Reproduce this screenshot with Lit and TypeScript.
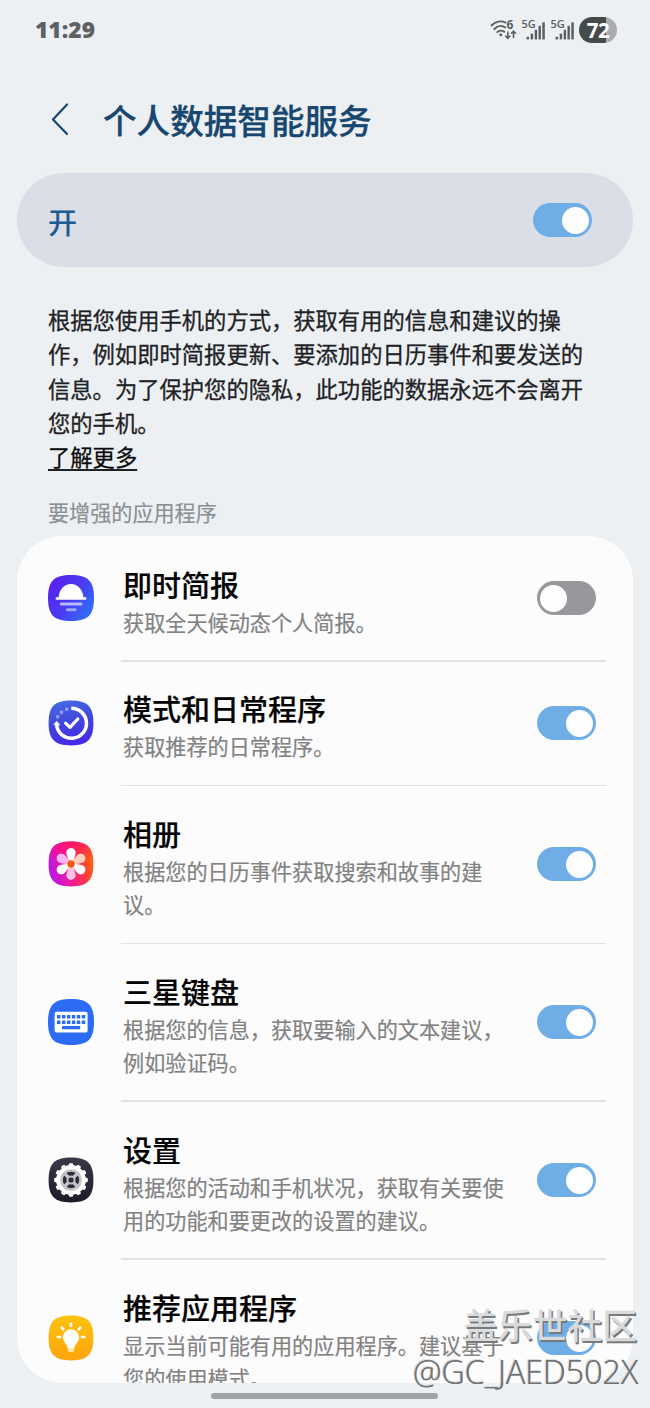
import { LitElement, html, css, svg, type TemplateResult } from "lit";
import { customElement, property } from "lit/decorators.js";
import { classMap } from "lit/directives/class-map.js";

const SQUIRCLE = "M24 1C41 1 47 7 47 24S41 47 24 47 1 41 1 24 7 1 24 1Z";
const SMALL_SQUIRCLE = "M24 1.6C40.4 1.6 46.4 7.6 46.4 24S40.4 46.4 24 46.4 1.6 40.4 1.6 24 7.6 1.6 24 1.6Z";

const briefIcon = html`<svg width="48" height="48" viewBox="0 0 48 48">
  <defs><linearGradient id="g" x1="0" y1="0.2" x2="1" y2="0.9">
    <stop offset="0" stop-color="#5a1fee" /><stop offset="0.5" stop-color="#4a3cf0" /><stop offset="1" stop-color="#2b78fb" />
  </linearGradient></defs>
  <path d=${SQUIRCLE} fill="url(#g)" />
  <path d="M11.6 23.3C12.2 15.8 17.2 10 24 10S35.8 15.8 36.4 23.3H38.2a1.1 1.1 0 0 1 0 2.5H9.8a1.1 1.1 0 0 1 0-2.5Z" fill="#fff" />
  <rect x="12.8" y="28.6" width="22.8" height="3" rx="1.5" fill="#b9b7fb" />
  <rect x="18.8" y="34.3" width="10.8" height="3" rx="1.5" fill="#9fa6fb" />
</svg>`;

const routineIcon = html`<svg width="48" height="48" viewBox="0 0 48 48">
  <defs><linearGradient id="g" x1="0.4" y1="0" x2="0.6" y2="1">
    <stop offset="0" stop-color="#4468e0" /><stop offset="0.5" stop-color="#4145df" /><stop offset="1" stop-color="#4527e6" />
  </linearGradient></defs>
  <path d=${SMALL_SQUIRCLE} fill="url(#g)" />
  <path d="M24.3 9.3A15 15 0 1 1 9.6 26" fill="none" stroke="#fff" stroke-width="3.5" />
  <path d="M7 25.6 9.7 22.4 12.6 26Z" fill="#fff" stroke="#fff" stroke-linejoin="round" />
  <path d="M18.6 24.2 23 28.3 30.8 20" fill="none" stroke="#fff" stroke-width="3.2" stroke-linecap="round" stroke-linejoin="round" />
  <g fill="#8d9cf0"><rect x="9" y="16" width="3.4" height="3.4" rx=".8" /><rect x="12.8" y="11.5" width="3.4" height="3.4" rx=".8" /><rect x="18" y="8.6" width="3.4" height="3.4" rx=".8" /></g>
</svg>`;

const petals = [0, 60, 120, 180, 240, 300];
const petalFill = ["#fff", "#ffd0c0", "#fff", "#ffc0e6", "#fff", "#f8b4f4"];
const galleryIcon = html`<svg width="48" height="48" viewBox="0 0 48 48">
  <defs>
    <linearGradient id="g" x1="0" y1="0.7" x2="1" y2="0.4">
      <stop offset="0" stop-color="#b516f2" /><stop offset="0.45" stop-color="#f51b8c" /><stop offset="0.75" stop-color="#fc3c3c" /><stop offset="1" stop-color="#fd6a0a" />
    </linearGradient>
    <linearGradient id="h" x1="0" y1="0" x2="0" y2="1">
      <stop offset="0" stop-color="#fb0a78" stop-opacity="0.75" /><stop offset="0.4" stop-color="#fb0a78" stop-opacity="0" />
    </linearGradient>
  </defs>
  <path d=${SMALL_SQUIRCLE} fill="url(#g)" />
  <path d=${SMALL_SQUIRCLE} fill="url(#h)" />
  ${petals.map((a, i) => svg`<path d="M22 21.5C21 17.5 19.3 15 19.3 12.8a4.7 4.7 0 0 1 9.4 0C28.7 15 27 17.5 26 21.5Z" fill=${petalFill[i]} transform="rotate(${a} 24 24)" />`)}
  <circle cx="24" cy="24" r="3.7" fill="#fb5a12" />
</svg>`;

const keyCols = [0, 1, 2, 3, 4, 5];
const keyboardIcon = html`<svg width="48" height="48" viewBox="0 0 48 48">
  <path d=${SQUIRCLE} fill="#2c6bf3" />
  <rect x="7.6" y="13.8" width="33" height="20.6" rx="2" fill="#fff" />
  <g fill="#2c6bf3">
    ${keyCols.map((c) => svg`<rect x=${10 + c * 4.95} y="16.9" width="3.5" height="3.7" rx=".4" /><rect x=${10 + c * 4.95} y="22.4" width="3.5" height="3.7" rx=".4" />`)}
    <rect x="15" y="28" width="18.2" height="3.2" rx=".4" />
  </g>
</svg>`;

const teeth = Array.from({ length: 12 }, (_, i) => i * 30);
const settingsIcon = html`<svg width="48" height="48" viewBox="0 0 48 48">
  <defs><linearGradient id="g" x1="0" y1="0" x2="0" y2="1"><stop offset="0" stop-color="#3b3949" /><stop offset="1" stop-color="#1c1b29" /></linearGradient></defs>
  <path d=${SMALL_SQUIRCLE} fill="url(#g)" />
  <circle cx="24" cy="24" r="14.9" fill="#fff" />
  ${teeth.map((a) => svg`<rect x="21.8" y="7.2" width="4.4" height="5" rx="1.2" fill="#fff" transform="rotate(${a} 24 24)" />`)}
  <circle cx="24" cy="24" r="10.8" fill="#c3c3ca" />
  <circle cx="24" cy="24" r="6.4" fill="none" stroke="#2d2c3a" stroke-width="3.6" />
  <path d="M17 17 31 31M31 17 17 31" stroke="#c3c3ca" stroke-width="3.2" />
  <circle cx="24" cy="24" r="2.6" fill="#2d2c3a" />
</svg>`;

const rays = [-90, -45, 0, 45, 90];
const tipsIcon = html`<svg width="48" height="48" viewBox="0 0 48 48">
  <defs><linearGradient id="g" x1="0" y1="0" x2="0" y2="1"><stop offset="0" stop-color="#fec20c" /><stop offset="1" stop-color="#fda40e" /></linearGradient></defs>
  <path d=${SMALL_SQUIRCLE} fill="url(#g)" />
  <path d="M24 15.3a8.2 8.2 0 0 1 8.2 8.2c0 4-3.5 5.3-4.9 10.5H20.7C19.3 28.8 15.8 27.5 15.8 23.5A8.2 8.2 0 0 1 24 15.3Z" fill="#fff" />
  <path d="M20.9 34H27.1V35.2a3.1 2.9 0 0 1-6.2 0Z" fill="#ffe7b0" />
  ${rays.map((a) => svg`<path d="M24 9.8V12" transform="rotate(${a} 24 23)" stroke="#fff" stroke-width="2.6" stroke-linecap="round" />`)}
</svg>`;

interface Item { icon: TemplateResult; title: string; text: string; on: boolean; }

const items: Item[] = [
  { icon: briefIcon, title: "即时简报", text: "获取全天候动态个人简报。", on: false },
  { icon: routineIcon, title: "模式和日常程序", text: "获取推荐的日常程序。", on: true },
  { icon: galleryIcon, title: "相册", text: "根据您的日历事件获取搜索和故事的建议。", on: true },
  { icon: keyboardIcon, title: "三星键盘", text: "根据您的信息，获取要输入的文本建议，例如验证码。", on: true },
  { icon: settingsIcon, title: "设置", text: "根据您的活动和手机状况，获取有关要使用的功能和要更改的设置的建议。", on: true },
  { icon: tipsIcon, title: "推荐应用程序", text: "显示当前可能有用的应用程序。建议基于您的使用模式。", on: true },
];

@customElement("ui-switch")
export class UiSwitch extends LitElement {
  @property({ type: Boolean }) on = false;
  static styles = css`
    :host { display: block; flex: none; }
    .track { box-sizing: border-box; display: flex; width: 59px; height: 34px; padding: 3.5px 3px; border-radius: 17px; background: #98979c; }
    .track.on { justify-content: flex-end; background: #6fade7; }
    .knob { width: 27px; height: 27px; border-radius: 50%; background: #fdfdfe; }
  `;
  render() {
    return html`<div class=${classMap({ track: true, on: this.on })}><div class="knob"></div></div>`;
  }
}

@customElement("service-row")
export class ServiceRow extends LitElement {
  @property({ attribute: false }) item!: Item;
  static styles = css`
    :host { display: block; }
    .row { display: flex; align-items: center; padding: 0 37px 0 30px; }
    .icon { width: 48px; height: 48px; flex: none; }
    .icon svg { display: block; }
    .copy { width: 390px; margin-left: 28px; padding: 26.7px 0 22.8px; flex: none; }
    .title { font-size: 29px; line-height: 42px; font-weight: 500; color: #050505; -webkit-text-stroke: 0.2px #050505; }
    .text { font-size: 21.15px; line-height: 33.2px; color: #828282; -webkit-text-stroke: 0.2px #828282; }
    ui-switch { margin-left: auto; }
  `;
  render() {
    const { icon, title, text, on } = this.item;
    return html`<div class="row">
      <div class="icon">${icon}</div>
      <div class="copy"><div class="title">${title}</div><div class="text">${text}</div></div>
      <ui-switch ?on=${on}></ui-switch>
    </div>`;
  }
}

const signal = html`<svg width="26" height="24" viewBox="0 0 26 24">
  <text x="0.5" y="10" class="net">5G</text>
  <g fill="#5b5f62"><rect x="5.5" y="18.8" width="2.6" height="2.6" /><rect x="9.7" y="15.6" width="2.4" height="5.8" /><rect x="13.7" y="11.8" width="2.4" height="9.6" /><rect x="17.5" y="7.8" width="2.4" height="13.6" /><rect x="21.3" y="4.3" width="2.5" height="17.1" /></g>
</svg>`;

@customElement("app-root")
export class AppRoot extends LitElement {
  static styles = css`
    :host {
      display: block; position: relative; width: 650px; height: 1408px; overflow: hidden; background: #ecf0f3;
      font-family: "Noto Sans CJK SC", sans-serif;
    }
    .page { display: flex; flex-direction: column; height: 1408px; }
    .status { display: flex; align-items: center; height: 60px; padding: 0 33px 0 35px; flex: none; }
    .time { font: 800 22.8px/30px "Open Sans", sans-serif; color: #5d6164; flex: 1; }
    .indicators { display: flex; align-items: center; }
    .indicators svg { display: block; overflow: visible; }
    .wifi { margin-right: 3px; }
    .sim { width: 29px; }
    .net { font: 600 11px "Open Sans", sans-serif; fill: #5b5f62; }
    .six { font: 700 12px "Open Sans", sans-serif; fill: #5b5f62; }
    .battery { width: 38px; height: 26px; border-radius: 13px; background: linear-gradient(90deg, #454a4b 72%, #a9adaf 72%); color: #fff; font: 700 20.5px/26px "Open Sans", sans-serif; letter-spacing: -0.5px; text-align: center; }
    .header { display: flex; align-items: center; height: 113px; padding: 0 50px; box-sizing: border-box; flex: none; }
    .back { width: 20px; height: 34px; margin: 5px 33px 0 0; }
    h1 { margin: 7px 0 0; font-size: 33.6px; line-height: 50px; font-weight: 500; color: #17466f; -webkit-text-stroke: 0.3px #17466f; }
    .master { display: flex; align-items: center; justify-content: space-between; box-sizing: border-box; height: 94px; margin: 0 17px; padding: 0 41px 0 31px; border-radius: 47px; background: #d9dee7; flex: none; }
    .state { margin-top: 2px; font-size: 29px; line-height: 42px; font-weight: 500; color: #1c5c93; }
    .intro { width: 545px; margin: 35px 0 0 48px; font-size: 22.3px; line-height: 34.3px; color: #1e2225; -webkit-text-stroke: 0.3px #1e2225; flex: none; }
    .more { color: #050505; text-decoration: underline; text-decoration-thickness: 2px; text-underline-offset: 3px; }
    .label { margin: 24px 0 0 48px; height: 38.6px; font-size: 21.1px; line-height: 30px; color: #8d9093; -webkit-text-stroke: 0.2px #8d9093; flex: none; }
    .card { height: 847px; margin: 0 17px; box-sizing: border-box; border-radius: 45px; background: #fcfcfd; overflow: hidden; flex: none; }
    .rule { height: 1.5px; margin: -0.75px 27px -0.75px 104px; background: #e1e2e3; }
    .home { width: 227px; height: 6px; margin: 10px 0 0 211px; border-radius: 3px; background: #a0a4a6; flex: none; }
    .mark { position: absolute; right: 12px; top: 1301px; text-align: right; color: #d9dadb; }
    .mark-name { margin-right: 1px; font-size: 34.8px; line-height: 46px; font-weight: 500; text-shadow: 1.5px 1.5px 0 #77797b; }
    .mark-user { margin-top: 2px; font: 300 32.2px/46px "Open Sans", sans-serif; color: #6f7274; text-shadow: -1px -1px 0 #dcddde, 0.5px 0 0 #7c7f81; }
  `;
  render() {
    return html`<div class="page">
      <div class="status">
        <div class="time">11:29</div>
        <div class="indicators">
          <svg class="wifi" width="28" height="24" viewBox="0 0 28 24">
            <g fill="none" stroke="#5b5f62" stroke-width="1.9" stroke-linecap="round">
              <path d="M1.5 7.5C5.5 3 11.5 2.5 15.5 4.6M4.3 11C7.5 7.6 12 7.2 15.2 9.5M7.2 14.2C9.2 12.2 12.2 12.2 14.2 13.8" />
              <path d="M17.8 14V20M15.8 18.2 17.8 20.3 19.8 18.2M23.5 19.5V13.5M21.5 15.2 23.5 13.2 25.5 15.2" stroke-width="1.6" />
            </g>
            <circle cx="10.8" cy="16.8" r="1.5" fill="#5b5f62" />
            <text class="six" x="16.5" y="10.8">6</text>
          </svg>
          <div class="sim">${signal}</div>
          <div class="sim">${signal}</div>
          <div class="battery">72</div>
        </div>
      </div>
      <div class="header">
        <svg class="back" viewBox="0 0 20 34"><path d="M17 2.5 3 17.5 17 32" fill="none" stroke="#17466f" stroke-width="2.2" stroke-linecap="round" stroke-linejoin="round" /></svg>
        <h1>个人数据智能服务</h1>
      </div>
      <div class="master"><div class="state">开</div><ui-switch on></ui-switch></div>
      <div class="intro">根据您使用手机的方式，获取有用的信息和建议的操作，例如即时简报更新、要添加的日历事件和要发送的信息。为了保护您的隐私，此功能的数据永远不会离开您的手机。<br /><span class="more">了解更多</span></div>
      <div class="label">要增强的应用程序</div>
      <div class="card">
        ${items.map((item, i) => html`${i ? html`<div class="rule"></div>` : ""}<service-row .item=${item}></service-row>`)}
      </div>
      <div class="home"></div>
    </div>
    <div class="mark"><div class="mark-name">盖乐世社区</div><div class="mark-user">@GC_JAED502X</div></div>`;
  }
}
